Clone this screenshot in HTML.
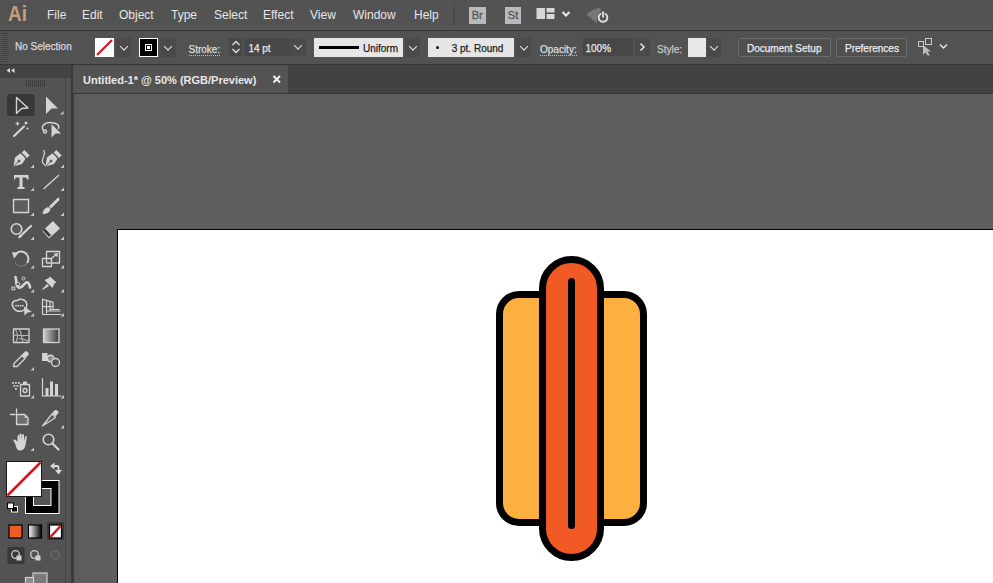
<!DOCTYPE html>
<html><head><meta charset="utf-8">
<style>
*{margin:0;padding:0;box-sizing:border-box}
html,body{width:993px;height:583px;overflow:hidden;background:#5e5e5e;font-family:"Liberation Sans",sans-serif}
.a{position:absolute}
#menubar{left:0;top:0;width:993px;height:26px;background:#535353}
#menuband{left:0;top:26px;width:993px;height:4px;background:#575757}
#menusep{left:0;top:30px;width:993px;height:1px;background:#343434}
#ctrl{left:0;top:31px;width:993px;height:33px;background:#525252}
#ctrlsep{left:0;top:64px;width:993px;height:1px;background:#363636}
#tabbar{left:73px;top:65px;width:920px;height:28px;background:#424242}
#tab{left:73px;top:65px;width:215px;height:28px;background:#535353}
#tabsep{left:73px;top:92.5px;width:920px;height:1.5px;background:#363636}
#tools{left:0;top:65px;width:71px;height:518px;background:#535353}
#toolshead{left:0;top:65px;width:71px;height:13px;background:#434343}
#toolsep{left:71px;top:65px;width:2.5px;height:518px;background:#3a3a3a}
#toolband{left:64.5px;top:78px;width:1.5px;height:505px;background:#474747}
#canstrip{left:73.5px;top:94px;width:6px;height:489px;background:#5b5b5b}
#artboard{left:117px;top:229px;width:900px;height:400px;background:#fff;border-left:1px solid #000;border-top:1px solid #000}
.m{color:#e6e6e6;font-size:12px;line-height:12px;top:8.7px}
.t{font-size:10px;line-height:10px;white-space:nowrap;-webkit-text-stroke:0.25px currentColor}
.dot{border-bottom:1px dotted #bdbdbd;padding-bottom:0}
.chev{background:#4a4a4a}
.chev::after{content:"";position:absolute;left:50%;top:50%;width:5px;height:5px;border-right:1.8px solid #e8e8e8;border-bottom:1.8px solid #e8e8e8;transform:translate(-50%,-75%) rotate(45deg)}
.btn{border:1px solid #6b6b6b;border-radius:2px;background:#4f4f4f}
</style></head><body>
<div class="a" id="menubar"></div>
<div class="a" id="menuband"></div>
<div class="a" id="menusep"></div>
<div class="a" id="ctrl"></div>
<div class="a" id="ctrlsep"></div>
<div class="a" id="tools"></div>
<div class="a" id="toolshead"></div>
<div class="a" id="toolband"></div>
<div class="a" id="toolsep"></div>
<div class="a" id="canstrip"></div>
<div class="a" id="tabbar"></div>
<div class="a" id="tab"></div>
<div class="a" id="tabsep"></div>
<div class="a" id="artboard"></div>

<!-- menu -->
<div class="a" style="left:6px;top:3px;width:26px;height:21px;background:#515151"></div>
<div class="a" style="left:7.5px;top:1.5px;font-size:22.5px;line-height:24px;color:#c69e7c;font-weight:bold;transform:scaleX(0.84);transform-origin:0 0;letter-spacing:0px">Ai</div>
<div class="a m" style="left:47px">File</div>
<div class="a m" style="left:82px">Edit</div>
<div class="a m" style="left:119px">Object</div>
<div class="a m" style="left:171px">Type</div>
<div class="a m" style="left:214px">Select</div>
<div class="a m" style="left:263px">Effect</div>
<div class="a m" style="left:310px">View</div>
<div class="a m" style="left:353px">Window</div>
<div class="a m" style="left:414px">Help</div>




<!-- menubar right icons -->
<div class="a" style="left:453px;top:4px;width:2px;height:22px;background:#4b4b4b"></div>
<div class="a" style="left:469px;top:7px;width:16.5px;height:16.5px;background:#bababa;color:#555;font-size:11px;font-weight:normal;line-height:17px;text-align:center;-webkit-text-stroke:0.3px #555">Br</div>
<div class="a" style="left:505px;top:7px;width:16px;height:16.5px;background:#bababa;color:#555;font-size:11px;font-weight:normal;line-height:17px;text-align:center;-webkit-text-stroke:0.3px #555">St</div>
<svg class="a" style="left:534px;top:4px" width="80" height="24">
  <rect x="2.5" y="4" width="8.5" height="11" fill="#d8d8d8"/>
  <rect x="12.5" y="4" width="8" height="4.5" fill="#d8d8d8"/>
  <rect x="12.5" y="10" width="8" height="5" fill="#d8d8d8"/>
  <polyline points="28.5,8 32,11.5 35.5,8" fill="none" stroke="#e8e8e8" stroke-width="2"/>
  <path d="M52.5 10.5 C56 7 61 4.5 67 3.5 L66.5 7 C64 10 63 14 62.5 19.5 C60 17 57 14 52.5 10.5 Z" fill="#767676"/>
  <circle cx="69" cy="13.5" r="4.3" fill="none" stroke="#dcdcdc" stroke-width="2"/>
  <line x1="69" y1="6.5" x2="69" y2="13.5" stroke="#535353" stroke-width="3.5"/>
  <line x1="69" y1="7.5" x2="69" y2="13.5" stroke="#e0e0e0" stroke-width="1.8"/>
</svg>
<!-- tab -->
<div class="a" style="left:83px;top:75.3px;font-size:11px;line-height:11px;font-weight:bold;color:#e8e8e8;white-space:nowrap">Untitled-1* @ 50% (RGB/Preview)</div>
<svg class="a" style="left:272px;top:75px" width="10" height="9"><path d="M1.5 1 L8 7.5 M8 1 L1.5 7.5" stroke="#f0f0f0" stroke-width="2"/></svg>

<!-- toolbar -->
<svg class="a" style="left:0;top:0" width="73" height="583">
 <g fill="none" stroke="#d2d2d2" stroke-width="1.3" stroke-linejoin="round" stroke-linecap="round">
  <path d="M10 68 L6.5 70.5 L10 73 Z" fill="#d8d8d8" stroke="none"/>
  <path d="M14.5 68 L11 70.5 L14.5 73 Z" fill="#d8d8d8" stroke="none"/>
 </g>
 <g stroke="#3d3d3d" stroke-width="1">
  <line x1="26.5" y1="80" x2="26.5" y2="87"/><line x1="28.5" y1="80" x2="28.5" y2="87"/><line x1="30.5" y1="80" x2="30.5" y2="87"/><line x1="32.5" y1="80" x2="32.5" y2="87"/><line x1="34.5" y1="80" x2="34.5" y2="87"/><line x1="36.5" y1="80" x2="36.5" y2="87"/><line x1="38.5" y1="80" x2="38.5" y2="87"/><line x1="40.5" y1="80" x2="40.5" y2="87"/><line x1="42.5" y1="80" x2="42.5" y2="87"/><line x1="44.5" y1="80" x2="44.5" y2="87"/>
 </g>
 <rect x="7" y="94" width="27.5" height="22" rx="2.5" fill="#383838"/>
 <!-- flyout triangles -->
 <g fill="#c8c8c8">
  <path d="M63.5 111 V114.5 H60 Z"/>
  <path d="M34 164.5 V168 H30.5 Z"/><path d="M64 164.5 V168 H60.5 Z"/>
  <path d="M34 187.5 V191 H30.5 Z"/><path d="M64 187.5 V191 H60.5 Z"/>
  <path d="M34 212.5 V216 H30.5 Z"/><path d="M64 212.5 V216 H60.5 Z"/>
  <path d="M34 236.5 V240 H30.5 Z"/><path d="M64 236.5 V240 H60.5 Z"/>
  <path d="M34 265 V268.5 H30.5 Z"/><path d="M64 265 V268.5 H60.5 Z"/>
  <path d="M34 289 V292.5 H30.5 Z"/><path d="M64 289 V292.5 H60.5 Z"/>
  <path d="M34 313 V316.5 H30.5 Z"/><path d="M64 313 V316.5 H60.5 Z"/>
  <path d="M34 367 V370.5 H30.5 Z"/>
  <path d="M34 395 V398.5 H30.5 Z"/><path d="M64 395 V398.5 H60.5 Z"/>
  <path d="M64 425 V428.5 H60.5 Z"/>
  <path d="M34 447.5 V451 H30.5 Z"/>
 </g>
 <g fill="none" stroke="#d4d4d4" stroke-width="1.4" stroke-linejoin="round" stroke-linecap="round">
  <!-- selection -->
  <path d="M16.5 97.5 L28 108 L21.5 108.5 L16.5 113.5 Z"/>
  <!-- magic wand -->
  <line x1="14" y1="136" x2="24" y2="126.5" stroke-width="2.2"/>
  <!-- lasso -->
  <path d="M44 131 C40 127 44 122.5 50 122.5 C56 122.5 60 125 58.5 128.5" />
  <circle cx="45" cy="131.5" r="1.6"/>
  <!-- curvature path -->
  <path d="M43.5 150.5 C47 152 41.5 158 42.5 162 C43 164 44.5 165 45.5 165.5" stroke-width="1.2"/>
  <!-- line -->
  <line x1="44" y1="188.5" x2="58.5" y2="175.5"/>
  <!-- rect -->
  <rect x="13.5" y="199.5" width="15" height="13" fill="#5e5e5e"/>
  <!-- blob brush circle -->
  <circle cx="16.5" cy="229" r="5.3" fill="#5a5a5a" stroke-width="1.6"/>
  <!-- rotate -->
  <path d="M14.5 255.5 A7 7 0 1 1 27.5 262.3" stroke-width="1.9"/>
  <path d="M27 263.5 A7 7 0 0 1 15 262" stroke="#7c7c7c" stroke-width="1.3" stroke-dasharray="1.5 1.5"/>
  <!-- scale -->
  <rect x="46.5" y="251.5" width="13" height="11.5" stroke-width="1.3"/>
  <rect x="42.5" y="258.5" width="9" height="8" stroke-width="1.3"/>
  <line x1="51" y1="259" x2="56" y2="254.5" stroke-width="1.3"/>
  <!-- shape builder blob -->
  <path d="M12.5 305.5 C11.5 301.5 15 300 17.5 300.5 C19.5 298.5 25.5 299 26.5 303 C27.5 306 26.5 310 22 311 C18 312 13.5 310.5 12.5 305.5 Z" stroke-width="1.5"/>
  <g fill="#d4d4d4" stroke="none"><circle cx="16" cy="305.7" r="0.9"/><circle cx="18.3" cy="305.7" r="0.9"/><circle cx="20.6" cy="305.7" r="0.9"/><circle cx="22.9" cy="305.7" r="0.9"/></g>
  <!-- perspective grid -->
  <path d="M42.5 299 V314.5 H61 M42.5 299.3 L53 302.2 M46.5 300 V313 M50 301 V311 M42.5 306.6 L53 306.6 M53 302.2 V309.5 M46.5 311 H60 M50 309.5 H59" stroke-width="1.2"/>
  <!-- mesh -->
  <rect x="13.5" y="329" width="15.5" height="13.5" fill="#484848" stroke-width="1.3"/>
  <path d="M15.5 330 C18 333 18 338 16 342 M19.5 329.5 C22 333 21 338 23 342 M13.5 335.5 C17 334 21 337 29 335 M19 339 C23 338 25 340 28.5 341" stroke="#b8b8b8" stroke-width="1.1"/>
  <!-- eyedropper tube -->
  <path d="M13.5 366.5 L14 363.5 L22 355.5 L25 358.5 L17 366.5 Z" stroke-width="1.3"/>
  <!-- blend circles -->
  <circle cx="50.5" cy="358.5" r="3.2" fill="#8a8a8a"/>
  <circle cx="55.5" cy="362.5" r="4" fill="#535353" stroke-width="1.4"/>
  <!-- symbol sprayer can -->
  <rect x="20.5" y="384.5" width="9" height="11.5" stroke-width="1.3"/>
  <circle cx="25" cy="390.5" r="2" stroke-width="1.3"/>
  <!-- column graph -->
  <path d="M42.5 378.5 V396 H61" stroke-width="1.2"/>
  <!-- artboard -->
  <path d="M17 415 H24 V418.5 H27.5 V424 H17 Z" fill="#7a7a7a" stroke="none"/>
  <path d="M19 415 V424 M21 415 V424 M23 415 V424 M25 418.5 V424" stroke="#5e5e5e" stroke-width="0.8"/>
  <path d="M10.5 414.5 H15 M16.5 409 V413" stroke-width="1.3"/>
  <path d="M16.5 414.5 V424.5 H28 V417.8 L24.6 414.5 Z" stroke-width="1.3"/>
  <path d="M24.6 414.5 V418 H28 Z" fill="#d4d4d4" stroke="none"/>
  <!-- slice -->
  <path d="M42.5 426 L52 414 L55.5 417.5 Z" stroke-width="1.3"/>
  <!-- zoom -->
  <circle cx="48.5" cy="439.5" r="5.3" stroke-width="1.6"/>
  <line x1="52.5" y1="443.5" x2="58.5" y2="449.5" stroke-width="2.2"/>
 </g>
 <g fill="#d4d4d4">
  <!-- direct selection -->
  <path d="M46 96.5 L58 108.5 L51.5 108.5 L46 114 Z"/>
  <!-- wand stars -->
  <path d="M17.5 121 L18.3 123 L20.3 123.5 L18.3 124.2 L17.5 126.2 L16.7 124.2 L14.7 123.5 L16.7 123 Z"/>
  <circle cx="26" cy="123" r="1.5"/><circle cx="27.5" cy="128.5" r="1.1"/>
  <!-- lasso arrow -->
  <path d="M51.5 124 L61 133.5 L55.5 133.5 L51.5 137.5 Z"/>
  <!-- pen -->
  <path d="M13.5 166.5 L15 157.5 L20.5 153.3 L25.6 158.4 L22 164 Z"/>
  <path d="M21.8 152.6 L24.3 150 L29.6 155.3 L27 157.9 Z"/>
  <path d="M45.5 166.5 L47 157.5 L52.5 153.3 L57.6 158.4 L54 164 Z"/>
  <path d="M53.8 152.6 L56.3 150 L61.6 155.3 L59 157.9 Z"/>
  <g stroke="#505050" stroke-width="0.9" fill="#505050"><line x1="14" y1="166" x2="18.5" y2="161.5"/><circle cx="19" cy="161" r="1"/><line x1="46" y1="166" x2="50.5" y2="161.5"/><circle cx="51" cy="161" r="1"/></g>
  <!-- type T -->
  <path d="M14 175 H28.5 V179.5 H27 L26.3 177.5 H22.5 V187 H24.5 V189 H17.5 V187 H19.5 V177.5 H15.7 L15 179.5 H14 Z"/>
  <!-- paintbrush -->
  <path d="M58.5 197.5 C60 198.5 59.5 200 58.5 201 L51 208.5 L49 206.5 L56.5 199 C57.5 198 58 197.5 58.5 197.5 Z"/>
  <path d="M48.5 207 L50.5 209 C50 212 47 214 42.5 214 C43 210 45 207.5 48.5 207 Z"/>
  <!-- blob brush handle -->
  <path d="M31 224.5 L32.5 226 L22 236 L20.5 234.5 Z"/>
  <path d="M20 234 L22.5 236.5 L19 238.5 L18 237.5 Z"/>
  <!-- eraser -->
  <path d="M53 221 L60 228.5 L49 238.5 L42.5 231 Z"/>
  <!-- rotate arrowhead -->
  <path d="M12 252 L18.5 253 L14 258.5 Z"/>
  <!-- warp -->
  <path d="M15.5 277 C17 280 15 285 18.5 287.5 C21.5 289 23 285 25.5 283 C28 281 29.5 284 30 287.5" fill="none" stroke="#d4d4d4" stroke-width="2.6" stroke-linecap="round"/>
  <circle cx="18" cy="284" r="1.8" fill="#535353" stroke="#d4d4d4" stroke-width="1"/>
  <circle cx="23.5" cy="278.5" r="1.5" fill="#535353" stroke="#d4d4d4" stroke-width="1"/>
  <rect x="12" y="287" width="2.8" height="2.8" fill="#535353" stroke="#d4d4d4" stroke-width="1"/>
  <path d="M58 253 L57.3 257.3 L53.7 253.7 Z"/>
  <!-- pin -->
  <path d="M50 276.5 L56.5 282.5 L54.5 283.5 L52.5 288 L44.5 280 L49 278 Z"/>
  <path d="M47 284 L49 286 L42.5 290 L42 289.5 Z"/>
  <!-- shape builder arrow -->
  <path d="M24 306.5 L32 312 L27.5 312.5 L24.5 315.5 Z"/>
  <!-- eyedropper top -->
  <path d="M21.5 355 L25 351.5 C27 350.5 29.5 353 28.5 355 L25 358.5 Z"/>
  <!-- blend square -->
  <rect x="42" y="353" width="5.5" height="8"/>
  <!-- sprayer dots -->
  <rect x="12" y="382" width="1.8" height="1.8"/><rect x="15" y="382" width="1.8" height="1.8"/><rect x="18" y="382" width="1.8" height="1.8"/>
  <rect x="13.5" y="385" width="1.8" height="1.8"/><rect x="16.5" y="385" width="1.8" height="1.8"/>
  <rect x="15" y="388" width="1.8" height="1.8"/>
  <rect x="23" y="381.5" width="4" height="3"/>
  <!-- graph bars -->
  <rect x="45.5" y="388" width="3" height="8"/><rect x="50" y="381.5" width="3" height="14.5"/><rect x="55" y="384" width="3" height="12"/>
  <!-- slice tip -->
  <path d="M52 413 L55 410 C57 409.5 59 411.5 58.5 413 L55.5 416.5 Z"/>
  <!-- hand -->
  <path d="M15 443 C13.5 441.5 13 440 14 439.5 C15 439 16.5 440.5 17.5 441.5 V436 C17.5 434.5 19 434.5 19.3 436 L19.5 440 V434.5 C19.5 433 21.5 433 21.5 434.5 V440 L22 435 C22.5 433.5 24 434 24 435.5 V441 L25 437 C25.5 435.5 27 436 26.8 437.5 L25.5 445 C25 448.5 23 450.5 20 450.5 C17.5 450.5 16.5 449 15 443 Z"/>
 </g>
 <!-- gradient tool -->
 <defs><linearGradient id="g1" x1="0" x2="1"><stop offset="0" stop-color="#d0d0d0"/><stop offset="1" stop-color="#3a3a3a"/></linearGradient>
 <linearGradient id="g2" x1="0" x2="1"><stop offset="0" stop-color="#ffffff"/><stop offset="1" stop-color="#000000"/></linearGradient></defs>
 <rect x="43.5" y="329" width="15.5" height="13.5" fill="url(#g1)" stroke="#d4d4d4" stroke-width="1.3"/>
 <!-- eraser lower part -->
 <path d="M45 228.5 L51 235 L49 237 L43 230.5 Z" fill="#3a3a3a"/>
 <!-- fill / stroke -->
 <rect x="25" y="480" width="34.5" height="34" fill="#fff"/>
 <rect x="26" y="481" width="32.5" height="32" fill="#000"/>
 <rect x="33" y="488" width="18.5" height="18" fill="#fff"/>
 <rect x="34" y="489" width="16.5" height="16" fill="#555"/>
 <rect x="6.5" y="461.5" width="35" height="35" fill="#fff" stroke="#1a1a1a" stroke-width="1"/>
 <line x1="7.5" y1="495.5" x2="40.5" y2="462.5" stroke="#e00f1e" stroke-width="2.5"/>
 <!-- swap arrows -->
 <g fill="none" stroke="#d8d8d8" stroke-width="1.8"><path d="M53 466 H57 C58 466 58.5 466.5 58.5 467.5 V471"/></g>
 <path d="M50 466 L54.5 462.5 V469.5 Z M58.5 474.5 L55 470 H62 Z" fill="#d8d8d8"/>
 <!-- default colors -->
 <rect x="11.5" y="506.5" width="6" height="5.5" fill="#000" stroke="#fff" stroke-width="1"/>
 <rect x="7.5" y="503" width="6" height="5.5" fill="#fff" stroke="#000" stroke-width="1"/>
 <!-- color modes -->
 <rect x="9" y="525" width="13" height="13" fill="#f15a24" stroke="#000" stroke-width="1.2"/>
 <rect x="28.5" y="525" width="13" height="13" fill="url(#g2)" stroke="#000" stroke-width="1.2"/>
 <rect x="47" y="522" width="17" height="18" rx="1" fill="#3a3a3a"/>
 <rect x="49.5" y="525" width="12" height="13" fill="#fff" stroke="#000" stroke-width="1.2"/>
 <line x1="50.5" y1="537" x2="60.5" y2="526" stroke="#e00f1e" stroke-width="2.5"/>
 <!-- draw modes -->
 <rect x="7.5" y="547" width="17" height="17" rx="1" fill="#383838"/>
 <g fill="none" stroke="#d0d0d0" stroke-width="1.3">
  <circle cx="15.5" cy="554.5" r="3.8"/>
  <circle cx="34.5" cy="554.5" r="3.8"/>
 </g>
 <rect x="16.5" y="555.5" width="5" height="5" fill="#d0d0d0"/>
 <rect x="35.5" y="555.5" width="5" height="5" fill="#d0d0d0"/>
 <circle cx="55" cy="555" r="4" fill="none" stroke="#6a6a6a" stroke-width="1.5"/>
 <!-- screen mode -->
 <rect x="33" y="573" width="14" height="12" fill="#7a7a7a" stroke="#cfcfcf" stroke-width="1.2"/>
 <rect x="25.5" y="577.5" width="8" height="8" fill="#8a8a8a" stroke="#cfcfcf" stroke-width="1.2"/>
</svg>

<!-- control bar -->
<div class="a" style="left:1px;top:33px;width:7px;height:29px;background:repeating-linear-gradient(#3f3f3f 0 1px,#5a5a5a 1px 2px)"></div>
<div class="a t" style="left:15px;top:42.2px;color:#d8d8d8">No Selection</div>
<div class="a" style="left:95px;top:38px;width:19px;height:19px;background:#fff"><svg width="19" height="19" style="display:block"><line x1="2" y1="17" x2="17" y2="2" stroke="#d7141e" stroke-width="2.2"/></svg></div>
<div class="a chev" style="left:116px;top:38px;width:15px;height:19px"></div>
<div class="a" style="left:139px;top:38px;width:19px;height:19px;background:#000;border:1px solid #fff"><div class="a" style="left:5px;top:5px;width:7px;height:7px;border:1px solid #fff"></div><div class="a" style="left:7px;top:7px;width:3px;height:3px;background:#fff"></div></div>
<div class="a chev" style="left:160px;top:38px;width:16px;height:19px"></div>
<div class="a t dot" style="left:188.5px;top:44.5px;color:#dcdcdc">Stroke:</div>
<div class="a" style="left:228.5px;top:38px;width:13.5px;height:18px;background:#474747"><svg width="14" height="18" style="display:block"><polyline points="3.5,7 7,3.5 10.5,7" fill="none" stroke="#e0e0e0" stroke-width="1.4"/><polyline points="3.5,11 7,14.5 10.5,11" fill="none" stroke="#e0e0e0" stroke-width="1.4"/></svg></div>
<div class="a" style="left:244px;top:38px;width:45.5px;height:18px;background:#474747"></div>
<div class="a t" style="left:248.4px;top:44px;color:#e6e6e6">14 pt</div>
<div class="a chev" style="left:290px;top:38px;width:15.5px;height:18px"></div>
<div class="a" style="left:313.5px;top:38px;width:89.5px;height:19px;background:#e6e6e6"></div>
<div class="a" style="left:318.5px;top:46px;width:40.5px;height:3px;background:#000"></div>
<div class="a t" style="left:363px;top:44px;color:#1e1e1e">Uniform</div>
<div class="a chev" style="left:405px;top:38px;width:15px;height:19px"></div>
<div class="a" style="left:427.5px;top:38px;width:86.5px;height:19px;background:#e6e6e6"></div>
<div class="a" style="left:436px;top:45.5px;width:3px;height:3px;background:#111;border-radius:1.5px"></div>
<div class="a t" style="left:451.7px;top:44px;color:#1e1e1e">3 pt. Round</div>
<div class="a chev" style="left:516px;top:38px;width:15px;height:19px"></div>
<div class="a t dot" style="left:540px;top:44.5px;color:#dcdcdc">Opacity:</div>
<div class="a" style="left:583px;top:38px;width:50px;height:18px;background:#474747"></div>
<div class="a t" style="left:585.5px;top:44px;color:#e6e6e6">100%</div>
<div class="a" style="left:635px;top:38px;width:14.5px;height:18px;background:#4a4a4a"><svg width="15" height="18" style="display:block"><polyline points="5.5,5.5 9,9 5.5,12.5" fill="none" stroke="#e6e6e6" stroke-width="1.5"/></svg></div>
<div class="a t" style="left:657px;top:44.5px;color:#c8c8c8">Style:</div>
<div class="a" style="left:688px;top:38px;width:17.5px;height:19px;background:#e8e8e8"></div>
<div class="a chev" style="left:707px;top:38px;width:14px;height:19px"></div>
<div class="a btn" style="left:738px;top:38px;width:92.5px;height:19px"></div>
<div class="a t" style="left:747px;top:44px;color:#ececec">Document Setup</div>
<div class="a btn" style="left:836px;top:38px;width:70.5px;height:19px"></div>
<div class="a t" style="left:845px;top:44px;color:#ececec">Preferences</div>
<svg class="a" style="left:914px;top:36px" width="40" height="22">
  <rect x="4.5" y="5.5" width="5" height="5" fill="none" stroke="#c8c8c8" stroke-width="1"/>
  <rect x="11.5" y="2.5" width="6" height="6" fill="none" stroke="#c8c8c8" stroke-width="1"/>
  <path d="M9 9 L9 19 L11.5 16.5 L14 20 L15.5 19 L13.5 15.5 L17 15.5 Z" fill="#bdbdbd"/>
  <polyline points="26,8.5 29.5,12 33,8.5" fill="none" stroke="#e6e6e6" stroke-width="1.5"/>
</svg>

<!-- hot dog -->
<svg class="a" style="left:0;top:0" width="993" height="583">
  <rect x="499.5" y="294.5" width="144" height="228" rx="19.5" fill="#fbb040" stroke="#000" stroke-width="7"/>
  <rect x="542.5" y="259.5" width="58" height="298" rx="29" fill="#f15a24" stroke="#000" stroke-width="7"/>
  <line x1="571.5" y1="281.5" x2="571.5" y2="525.5" stroke="#000" stroke-width="7" stroke-linecap="round"/>
</svg>
</body></html>
